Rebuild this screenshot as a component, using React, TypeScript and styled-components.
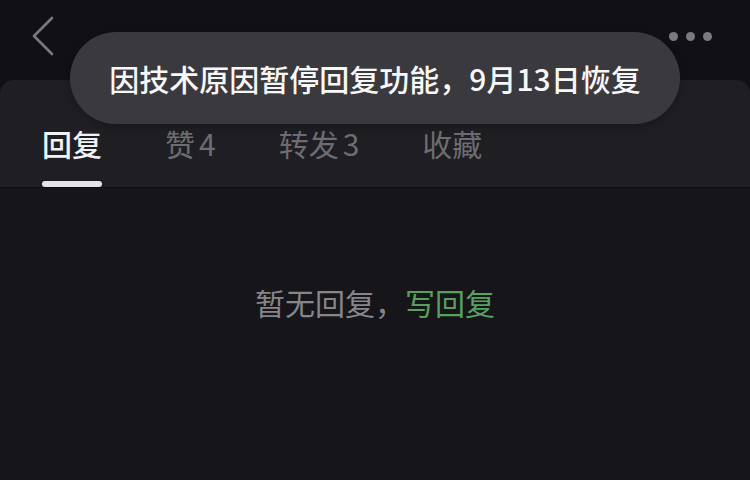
import styled, {createGlobalStyle} from "styled-components";

const GlobalStyle = createGlobalStyle`
  html, body {
    margin: 0;
    padding: 0;
    background: #16151a;
  }
  body {
    font-family: "Noto Sans CJK SC", "Noto Sans", sans-serif;
  }
`;

// 스타일
const Screen = styled.div`
  position: relative;
  width: 750px;
  height: 480px;
  overflow: hidden;
  background: #111014;
  display: flex;
  flex-direction: column;
`;
const TopBar = styled.header`
  height: 80px;
  flex-shrink: 0;
  display: flex;
  justify-content: space-between;
  align-items: flex-start;
  padding: 16px 38px 0 32px;
  box-sizing: border-box;
`;
const MoreDots = styled.div`
  display: flex;
  gap: 8px;
  padding-top: 16px;

  span {
    width: 9px;
    height: 9px;
    border-radius: 50%;
    background: #7b7b7f;
  }
`;
const Panel = styled.section`
  flex: 1;
  display: flex;
  flex-direction: column;
  background: #16151a;
  border-radius: 14px 14px 0 0;
  overflow: hidden;
`;
const TabBar = styled.nav`
  height: 108px;
  box-sizing: border-box;
  background: #1f1e23;
  border-bottom: 1px solid #0c0c0e;
  display: flex;
  align-items: stretch;
  gap: 63px;
  padding: 0 42px;
`;
const Tab = styled.div<{ $active?: boolean }>`
  position: relative;
  display: flex;
  align-items: center;
  padding-top: 37px;
  padding-bottom: 19px;
  box-sizing: border-box;
  font-size: 30px;
  font-weight: ${p => (p.$active ? 500 : 400)};
  color: ${p => (p.$active ? "#f2f2f4" : "#6d6d71")};
  white-space: nowrap;

  &::after {
    content: "";
    display: ${p => (p.$active ? "block" : "none")};
    position: absolute;
    left: 0;
    right: 0;
    bottom: 0;
    height: 6px;
    border-radius: 3px;
    background: #e4e3e8;
  }
`;
const Count = styled.span`
  margin-left: 4px;
`;
const Empty = styled.div`
  display: flex;
  justify-content: center;
  padding-top: 92px;
  font-size: 30px;
  color: #86868a;
`;
const WriteLink = styled.span`
  color: #58a05e;
`;
const Toast = styled.div`
  position: absolute;
  left: 70px;
  top: 32px;
  width: 610px;
  height: 92px;
  border-radius: 46px;
  background: #3a393e;
  display: flex;
  align-items: center;
  justify-content: center;
  font-size: 30px;
  font-weight: 500;
  color: #f7f7f7;
  box-shadow: 0 2px 10px rgba(0, 0, 0, 0.25);
`;

// 기능
const tabs = [
  {id: "reply", label: "回复", count: null, active: true},
  {id: "like", label: "赞", count: 4, active: false},
  {id: "repost", label: "转发", count: 3, active: false},
  {id: "fav", label: "收藏", count: null, active: false},
];

function BackIcon() {
  return (
    <svg width="26" height="42" viewBox="0 0 26 42" fill="none">
      <path d="M20 2 L2 20 L20 38" stroke="#7a7a7e" strokeWidth="2.6" strokeLinecap="round" strokeLinejoin="round" />
    </svg>
  );
}

function App() {
  return (
    <Screen>
      <GlobalStyle />
      <TopBar>
        <BackIcon />
        <MoreDots>
          <span />
          <span />
          <span />
        </MoreDots>
      </TopBar>
      <Panel>
        <TabBar>
          {tabs.map(tab => (
            <Tab key={tab.id} $active={tab.active}>
              {tab.label}
              {tab.count !== null && <Count>{tab.count}</Count>}
            </Tab>
          ))}
        </TabBar>
        <Empty>
          暂无回复，<WriteLink>写回复</WriteLink>
        </Empty>
      </Panel>
      <Toast>因技术原因暂停回复功能，9月13日恢复</Toast>
    </Screen>
  );
}

export default App;
